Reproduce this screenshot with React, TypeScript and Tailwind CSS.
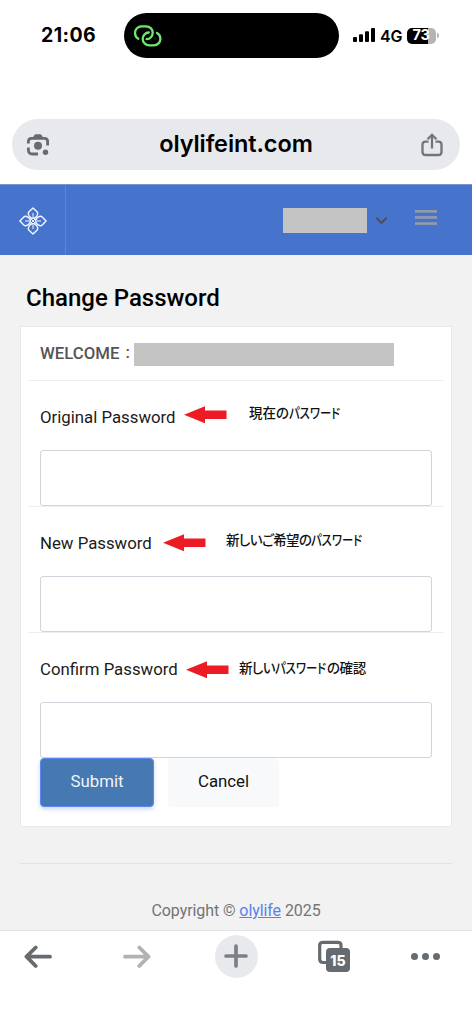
import React from "react";

const JP_FONT =
  "font-['Noto_Sans_CJK_JP',sans-serif] font-medium [font-feature-settings:'palt'] whitespace-nowrap leading-none text-[#111]";

const RedArrow = () => (
  <svg className="shrink-0" width="43" height="18" viewBox="0 0 43 18">
    <path d="M0 8.700 21 0.200V4.500H42.500V13H21V17.200Z" fill="#ed1c24" />
  </svg>
);

// narrow katakana, like a UI font
const Kana = () => <span className="inline-block w-[52px]"><span className="inline-block origin-left scale-x-[0.84]">パスワード</span></span>;

const StatusBar = () => (
  <div className="h-[106px] flex items-start pt-[13px] bg-white font-[Inter,sans-serif] text-black">
    <div className="w-[124px] h-[45px] pl-[41px] flex items-center text-[19.500px] font-bold tracking-[0.4px]">21:06</div>
    <div className="w-[215px] h-[45px] rounded-full bg-black flex items-center pl-[9px]">
      <svg width="30" height="26" viewBox="0 0 30 26" fill="none" stroke="#6fe872" strokeWidth="2.300" strokeLinecap="round">
        <path d="M5.300 15.700C3.200 14.500 2 12.400 2 9.900C2 6.200 4.900 3.300 8.600 3.300H13C16.800 3.300 19.700 6.100 19.700 9.700C19.700 13.200 17.100 16 13.600 16.100" />
        <path d="M24 9.900C26.200 11.100 27.400 13.200 27.400 15.700C27.400 19.400 24.500 22.300 20.800 22.300H16.400C12.600 22.300 9.700 19.500 9.700 15.900C9.700 12.400 12.300 9.600 15.800 9.500" />
      </svg>
    </div>
    <div className="h-[45px] pl-[14px] flex items-center">
      <svg className="mb-[1px]" width="23" height="14" viewBox="0 0 23 14">
        <rect x="0" y="9" width="4" height="5" rx="1" />
        <rect x="6" y="6.300" width="4" height="7.700" rx="1" />
        <rect x="12" y="3.300" width="4" height="10.700" rx="1" />
        <rect x="18" y="0" width="4" height="14" rx="1" />
      </svg>
      <span className="ml-[4px] w-[27px] text-[16px] font-semibold tracking-[-0.2px]">4G</span>
      <div className="w-[29px] h-4 rounded-[5px] bg-[linear-gradient(to_right,#000_21px,#b4b4b4_21px)] text-white text-[14.500px] font-bold flex items-center justify-center leading-none tracking-[-0.4px] pr-[1px]">
        73
      </div>
      <div className="ml-[1px] w-[2px] h-[5px] rounded-r-full bg-[#b4b4b4]" />
    </div>
  </div>
);

const AddressBar = () => (
  <div className="h-[78px] px-3 pt-[13px] bg-white">
    <div className="h-[51px] rounded-full bg-[#e8e9ed] flex items-center justify-between pl-[14px] pr-[16px]">
      <svg width="24" height="24" viewBox="0 0 24 24" fill="none" stroke="#656b6f" strokeWidth="2.800">
        <path d="M2.400 10.500V8.500Q2.400 5.300 5.500 5.300H18.500Q21.600 5.300 21.600 8.500V12.500" />
        <path d="M2.400 14.500V17Q2.400 21 6.500 21H12" />
        <path d="M7 5Q8 1.300 10 1.300H14Q16 1.300 17 5Z" fill="#656b6f" stroke="none" />
        <circle cx="12" cy="12.700" r="4" fill="#656b6f" stroke="none" />
        <circle cx="19.500" cy="19.300" r="2.700" fill="#656b6f" stroke="none" />
      </svg>
      <span className="pl-[2px] pb-[2px] font-[Inter,sans-serif] font-semibold text-[23.500px] text-black tracking-[-0.100px]">olylifeint.com</span>
      <svg width="24" height="24" viewBox="0 0 24 24" fill="none" stroke="#70757a" strokeWidth="2.300">
        <path d="M8.500 8.700H5.500Q2.500 8.700 2.500 11.500V19Q2.500 22 5.500 22H18.500Q21.500 22 21.500 19V11.500Q21.500 8.700 18.500 8.700H15.500" />
        <path d="M12 15.500V2M7.500 6.200 12 1.800 16.500 6.200" />
      </svg>
    </div>
  </div>
);

const Logo = () => (
  <svg width="28" height="28" viewBox="0 0 28 28" fill="none" stroke="#f4f7fd" strokeWidth="1.400" strokeLinejoin="round">
    {[0, 90, 180, 270].map((deg) => (
      <g key={deg} transform={`rotate(${deg} 14 14)`}>
        <path d="M14 0.900L18 4.800Q18.900 5.700 18.700 7Q18.300 9.800 15.400 11.200H12.600Q9.700 9.800 9.300 7Q9.100 5.700 10 4.800Z" />
        <path d="M14 6V10.500" strokeWidth="1" />
        <path d="M14 14 11.500 11.500" strokeWidth="1" />
      </g>
    ))}
  </svg>
);

const Header = () => (
  <div className="h-[71px] bg-[#4673cc] border-t border-[#7895cf] flex">
    <div className="w-[66px] border-r border-[#5a85ee] flex items-center justify-center pt-[2px]">
      <Logo />
    </div>
    <div className="ml-auto pr-[35px] flex items-start pt-[23px]">
      <div className="w-[84px] h-[25px] bg-[#c4c4c4]" />
      <svg className="ml-[8px] mt-[8px]" width="13" height="9" viewBox="0 0 13 9" fill="none" stroke="#495057" strokeWidth="2">
        <path d="M1.300 1.800 6.500 7 11.700 1.800" />
      </svg>
      <svg className="ml-[27px] mt-[2px]" width="22" height="15" viewBox="0 0 22 15" fill="#929aab">
        <rect y="0" width="22" height="2.700" />
        <rect y="6.100" width="22" height="2.700" />
        <rect y="12.200" width="22" height="2.700" />
      </svg>
    </div>
  </div>
);

const Input = () => (
  <input type="password" className="block w-[392px] h-[56px] ml-[12px] rounded-[3px] border-[1.500px] border-[#d0d5db] bg-white px-3" />
);

const Label = ({ children }: { children: string }) => (
  <label className="block text-[16.800px] leading-6 text-[#1b1b1b] whitespace-nowrap">{children}</label>
);

const Toolbar = () => (
  <div className="h-[94px] bg-white border-t border-[#e2e3e6] flex items-start pt-[4px]">
    <svg className="ml-[24px] mt-[10px]" width="28" height="24" viewBox="0 0 28 24" fill="none" stroke="#656b6f" strokeWidth="3.800" strokeLinecap="round" strokeLinejoin="round">
      <path d="M26 11.700H2.500M11.700 2.500 2.500 11.700 11.700 21" />
    </svg>
    <svg className="ml-[71px] mt-[10px]" width="28" height="24" viewBox="0 0 28 24" fill="none" stroke="#b2b2b2" strokeWidth="3.800" strokeLinecap="round" strokeLinejoin="round">
      <path d="M2 11.700H25.500M16.300 2.500 25.500 11.700 16.300 21" />
    </svg>
    <div className="ml-[64px] w-[43px] h-[43px] rounded-full bg-[#e8e9ed] flex items-center justify-center">
      <svg className="mr-[1px] mb-[1px]" width="24" height="24" viewBox="0 0 24 24" fill="none" stroke="#7b8086" strokeWidth="3.700" strokeLinecap="round">
        <path d="M12 2V22M2 12H22" />
      </svg>
    </div>
    <svg className="ml-[60px] mt-[5px]" width="33" height="32" viewBox="0 0 33 32">
      <path d="M8 22.500H5Q1.700 22.500 1.700 19V5Q1.700 2.300 5 2.300H19.500Q23 2.300 23 5V8" fill="none" stroke="#656b6f" strokeWidth="3.200" />
      <rect x="8" y="8" width="24" height="24" rx="4" fill="#656b6f" />
      <text x="20" y="25.500" fill="#fff" fontSize="14" fontWeight="800" fontFamily="Inter, sans-serif" textAnchor="middle">15</text>
    </svg>
    <div className="ml-[60px] mt-[18px] flex gap-[4px]">
      <div className="w-[7px] h-[7px] rounded-full bg-[#656b6f]" />
      <div className="w-[7px] h-[7px] rounded-full bg-[#656b6f]" />
      <div className="w-[7px] h-[7px] rounded-full bg-[#656b6f]" />
    </div>
  </div>
);

const App = () => {
  return (
    <div className="w-[472px] h-[1024px] flex flex-col overflow-hidden bg-[#f2f2f2] font-[Roboto,sans-serif]">
      <StatusBar />
      <AddressBar />
      <Header />

      {/* Page content */}
      <div className="flex-1 px-[20px] pt-[27px]">
        <h1 className="pl-[6px] text-[24px] leading-8 font-medium text-black">Change Password</h1>

        <form className="mt-[12px] h-[501px] bg-white border border-[#e5e8ed] px-[7px]">
          <div className="h-[53px] flex items-center pl-[12px]">
            <span className="text-[16.800px] font-medium text-[#555] whitespace-nowrap w-[94px]">
              WELCOME<span className="ml-[6px] relative -top-px">:</span>
            </span>
            <div className="w-[260px] h-[23px] mt-px bg-[#c3c3c3]" />
          </div>

          {/* Original password */}
          <div className="h-[126px] border-t border-[#eceef0]">
            <div className="h-[69px] pt-[24px] pl-[12px] flex items-start">
              <div className="w-[144px]"><Label>Original Password</Label></div>
              <div className="mt-px"><RedArrow /></div>
              <span className={`ml-[22px] mt-[1px] text-[13.500px] ${JP_FONT}`}>現在の<Kana /></span>
            </div>
            <Input />
          </div>

          {/* New password */}
          <div className="h-[126px] border-t border-[#eceef0]">
            <div className="h-[69px] pt-[24px] pl-[12px] flex items-start">
              <div className="w-[123px]"><Label>New Password</Label></div>
              <div className="mt-[3px]"><RedArrow /></div>
              <span className={`ml-[20px] mt-[2px] text-[13.500px] ${JP_FONT}`}><span className="tracking-[-0.6px]">新しいご希望の</span><Kana /></span>
            </div>
            <Input />
          </div>

          {/* Confirm password */}
          <div className="h-[126px] border-t border-[#eceef0]">
            <div className="h-[69px] pt-[24px] pl-[12px] flex items-start">
              <div className="w-[146px]"><Label>Confirm Password</Label></div>
              <div className="mt-[4px]"><RedArrow /></div>
              <span className={`ml-[10px] mt-[4px] text-[13.500px] ${JP_FONT}`}><span className="tracking-[-0.6px]">新しい</span><Kana /><span className="tracking-[-0.3px]">の確認</span></span>
            </div>
            <Input />
          </div>

          <div className="flex pl-[12px] gap-[14px] text-[16.800px]">
            <button type="submit" className="w-[114px] h-[49px] pb-[2px] rounded-[4px] border border-[#5c87ee] bg-[#4678b2] text-[#f0f4fa] shadow-[0_2px_4px_rgba(85,110,230,0.3)]">
              Submit
            </button>
            <button type="button" className="w-[111px] h-[49px] pb-[2px] rounded-[4px] bg-[#f8f9fa] text-[#111]">
              Cancel
            </button>
          </div>
        </form>

        <div className="mt-[36px] border-t border-[#e2e2e2] pt-[35px] text-center text-[16px] leading-6 tracking-[-0.080px] text-[#747474]">
          Copyright © <a className="text-[#5b80ed] underline">olylife</a> 2025
        </div>
      </div>

      <Toolbar />
    </div>
  );
};

export default App;
